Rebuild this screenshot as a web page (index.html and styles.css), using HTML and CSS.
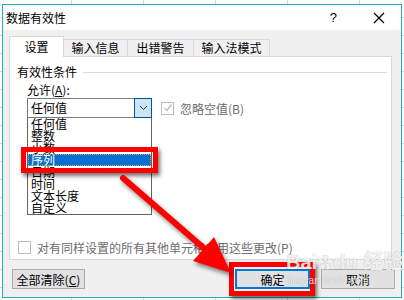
FILE: index.html
```html
<!DOCTYPE html>
<html>
<head>
    <meta charset="UTF-8">
    <title>数据有效性</title>
    <link rel="stylesheet" href="styles.css">
</head>
<body>
    <div class="window">
        <div class="titlebar">
            <span class="title">数据有效性</span>
            <span class="help">?</span>
            <svg class="close" width="12" height="12" viewBox="0 0 12 12">
                <path d="M1 1 L11 11 M11 1 L1 11" stroke="#000" stroke-width="1.2" fill="none"/>
            </svg>
        </div>
        <div class="dlg">
            <div class="tabs">
                <div class="tab active t1">设置</div>
                <div class="tab t2">输入信息</div>
                <div class="tab t3">出错警告</div>
                <div class="tab t4">输入法模式</div>
            </div>
            <div class="panel">
                <div class="group">
                    <span>有效性条件</span>
                    <i class="groupline"></i>
                </div>
                <div class="label">允许(<u>A</u>):</div>
                <div class="row">
                    <div class="combo">
                        <span class="combo-text">任何值</span>
                        <span class="combo-btn">
                            <svg width="9" height="6" viewBox="0 0 9 6">
                                <path d="M1 1 L4.5 4.5 L8 1" stroke="#333" stroke-width="1" fill="none"/>
                            </svg>
                        </span>
                    </div>
                    <div class="check disabled">
                        <span class="box">
                            <svg width="10" height="10" viewBox="0 0 10 10">
                                <path d="M1.5 5 L4 7.5 L8.5 1.5" stroke="#bcbcbc" stroke-width="1.3" fill="none"/>
                            </svg>
                        </span>
                        <span>忽略空值(B)</span>
                    </div>
                </div>
                <ul class="list">
                    <li>任何值</li>
                    <li>整数</li>
                    <li>小数</li>
                    <li class="sel">序列</li>
                    <li>日期</li>
                    <li>时间</li>
                    <li>文本长度</li>
                    <li>自定义</li>
                </ul>
                <div class="check disabled apply">
                    <span class="box"></span>
                    <span>对有同样设置的所有其他单元格应用这些更改(P)</span>
                </div>
            </div>
            <div class="buttons">
                <button class="btn clear">全部清除(<u>C</u>)</button>
                <span class="spacer"></span>
                <button class="btn ok">确定</button>
                <button class="btn">取消</button>
            </div>
        </div>
    </div>

    <!-- annotation over the screenshot -->
    <div class="mark mark-seq"></div>
    <div class="mark mark-ok"></div>
    <svg class="arrow" width="404" height="300" viewBox="0 0 404 300">
        <path d="M123 178 L206 250" stroke="#ff0000" stroke-width="6" stroke-linecap="round" fill="none"/>
        <path d="M231 273 L193 261 L214 237 Z" fill="#ff0000"/>
    </svg>
    <div class="watermark">
        <div class="wm-logo">Bai<span class="paw">&#10047;</span>du 经验</div>
        <div class="wm-url">jingyan.baidu.com</div>
    </div>
</body>
</html>
```

FILE: styles.css
```css
*{
    margin: 0;
    padding: 0;
    box-sizing: border-box;
}
html,body{
    width: 404px;
    height: 300px;
    overflow: hidden;
}
body{
    position: relative;
    font-family: "Noto Sans CJK SC", "Liberation Sans", sans-serif;
    font-size: 12px;
    color: #000;
    background-color: #fff;
    background-image:
        repeating-linear-gradient(to bottom, transparent 0 17px, #d4d4d4 17px 18px),
        repeating-linear-gradient(to right, transparent 0 71px, #d4d4d4 71px 72px);
    padding: 4px 0 0 2px;
}
.window{
    width: 400px;
    height: 294px;
    border: 1px solid #1eaebf;
    background-color: #f0f0f0;
    display: flex;
    flex-direction: column;
}
.titlebar{
    height: 25px;
    background-color: #fff;
    display: flex;
    align-items: center;
    padding-left: 3px;
}
.title{
    font-size: 12px;
    color: #000;
    flex: 1;
}
.help{
    font-family: "Liberation Sans", sans-serif;
    font-size: 13px;
    margin-right: 36px;
}
.close{
    margin-right: 16px;
}
.dlg{
    flex: 1;
    padding: 6px 8px 0 6px;
    display: flex;
    flex-direction: column;
}
.tabs{
    display: flex;
    height: 20px;
    align-items: flex-end;
}
.tab{
    height: 17px;
    border: 1px solid #d9d9d9;
    border-bottom: none;
    background-color: #f0f0f0;
    text-align: center;
    line-height: 16px;
    margin-left: -1px;
}
.tab.active{
    height: 20px;
    background-color: #fff;
    line-height: 20px;
    margin-left: 0;
    position: relative;
    z-index: 1;
    margin-bottom: -1px;
    height: 21px;
}
.t1{ width: 55px; }
.t2{ width: 65px; }
.t3{ width: 67px; }
.t4{ width: 77px; }
.panel{
    width: 383px;
    height: 204px;
    background-color: #fff;
    border: 1px solid #d9d9d9;
    padding: 8px 4px 0 7px;
}
.group{
    display: flex;
    align-items: center;
    height: 14px;
    line-height: 14px;
}
.groupline{
    flex: 1;
    border-top: 1px solid #dcdcdc;
    margin-left: 6px;
}
.label{
    margin: 4px 0 0 10px;
    height: 15px;
    line-height: 14px;
}
.row{
    display: flex;
    align-items: center;
    margin-left: 10px;
}
.combo{
    width: 125px;
    height: 20px;
    border: 1px solid #7a7a7a;
    display: flex;
    align-items: center;
}
.combo-text{
    flex: 1;
    padding-left: 3px;
    line-height: 18px;
}
.combo-btn{
    width: 18px;
    height: 20px;
    margin: -1px -1px -1px 0;
    border: 1px solid #005499;
    background-color: #cce4f7;
    display: flex;
    align-items: center;
    justify-content: center;
}
.check{
    display: flex;
    align-items: center;
    gap: 6px;
    margin-left: 9px;
}
.check.disabled{
    color: #6d6d6d;
}
.box{
    width: 13px;
    height: 13px;
    border: 1px solid #bcbcbc;
    background-color: #fff;
    display: flex;
    align-items: center;
    justify-content: center;
}
.list{
    list-style: none;
    width: 125px;
    height: 97px;
    margin-left: 10px;
    border: 1px solid #646464;
    border-top: none;
    background-color: #fff;
}
.list li{
    height: 12px;
    line-height: 12px;
    padding-left: 3px;
    white-space: nowrap;
}
.list li.sel{
    background-color: #0a6fd0;
    color: #fff;
    outline: 1px dotted #f0a040;
    outline-offset: -1px;
}
.apply{
    margin: 24px 0 0 1px;
}
.buttons{
    display: flex;
    margin: 9px -2px 0 2px;
}
.spacer{
    flex: 1;
}
.btn{
    font-family: inherit;
    font-size: 12px;
    width: 74px;
    height: 20px;
    background-color: #e1e1e1;
    border: 1px solid #adadad;
    color: #000;
    margin-left: 11px;
}
.btn.clear{
    width: 73px;
    margin-left: 1px;
}
.btn.ok{
    border: 2px solid #0078d7;
    width: 75px;
}
.mark{
    position: absolute;
    border: 5px solid #ff0000;
    box-shadow: 2px 3px 4px rgba(0,0,0,0.55);
}
.mark-seq{
    left: 21px;
    top: 147px;
    width: 137px;
    height: 26px;
}
.mark-ok{
    left: 229px;
    top: 262px;
    width: 86px;
    height: 34px;
}
.arrow{
    position: absolute;
    left: 0;
    top: 0;
    filter: drop-shadow(2px 3px 2px rgba(0,0,0,0.5));
}
.watermark{
    position: absolute;
    left: 286px;
    top: 251px;
    color: rgba(255,255,255,0.85);
    text-shadow: 0 0 1px rgba(0,0,0,0.35);
    font-family: "Liberation Sans", "Noto Sans CJK SC", sans-serif;
}
.wm-logo{
    font-size: 20px;
    font-weight: bold;
    line-height: 22px;
}
.paw{
    font-size: 16px;
}
.wm-url{
    font-size: 10px;
    line-height: 12px;
    margin-left: 2px;
}
```
